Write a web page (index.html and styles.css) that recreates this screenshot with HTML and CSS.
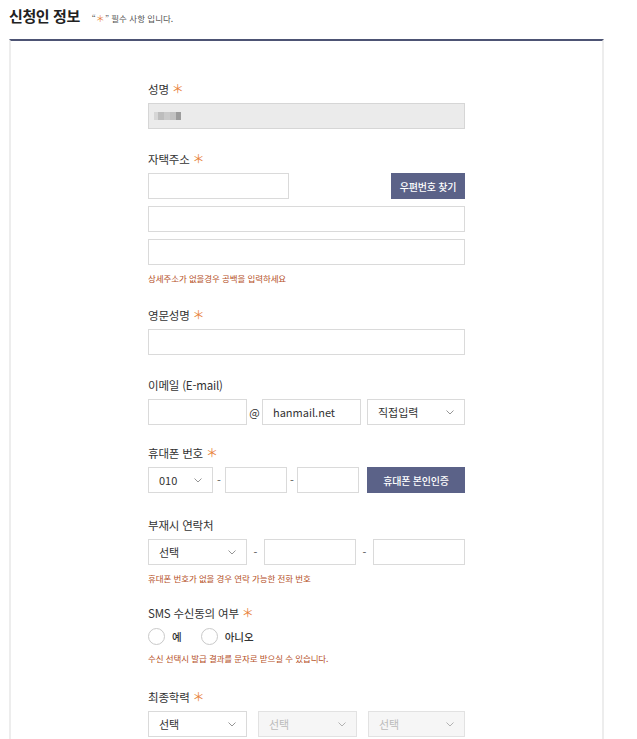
FILE: index.html
```html
<!DOCTYPE html>
<html lang="ko">
<head>
<meta charset="utf-8">
<title>신청인 정보</title>
<link rel="stylesheet" href="styles.css">
</head>
<body>
<div class="page">
  <div class="head">
    <h2 class="title">신청인 정보</h2>
    <span class="note">“<span class="star">＊</span>” 필수 사항 입니다.</span>
  </div>
  <div class="card">
    <div class="form">
      <div class="field">
        <div class="label">성명 <span class="star">＊</span></div>
        <div class="input disabled w-full">
          <span class="blur"><i class="b1"></i><i class="b2"></i><i class="b3"></i><i class="b4"></i><i class="b5"></i></span>
        </div>
      </div>

      <div class="field">
        <div class="label">자택주소 <span class="star">＊</span></div>
        <div class="row between">
          <div class="input w-zip"></div>
          <div class="btn w-zipbtn">우편번호 찾기</div>
        </div>
        <div class="input w-full mt7"></div>
        <div class="input w-full mt7"></div>
        <div class="hint">상세주소가 없을경우 공백을 입력하세요</div>
      </div>

      <div class="field">
        <div class="label">영문성명 <span class="star">＊</span></div>
        <div class="input w-full"></div>
      </div>

      <div class="field mb20">
        <div class="label">이메일 (E-mail)</div>
        <div class="row">
          <div class="input w99"></div>
          <span class="at">@</span>
          <div class="input w99 text">hanmail.net</div>
          <div class="select w98 ml6"><span>직접입력</span><svg class="chev" viewBox="0 0 8 5"><path d="M0.5 0.5 L4 4 L7.5 0.5"/></svg></div>
        </div>
      </div>

      <div class="field mb24">
        <div class="label">휴대폰 번호 <span class="star">＊</span></div>
        <div class="row">
          <div class="select w65"><span>010</span><svg class="chev" viewBox="0 0 8 5"><path d="M0.5 0.5 L4 4 L7.5 0.5"/></svg></div>
          <span class="dash d12">-</span>
          <div class="input w62"></div>
          <span class="dash d10">-</span>
          <div class="input w62"></div>
          <div class="btn w98 ml8">휴대폰 본인인증</div>
        </div>
      </div>

      <div class="field mb20">
        <div class="label">부재시 연락처</div>
        <div class="row">
          <div class="select w99"><span>선택</span><svg class="chev" viewBox="0 0 8 5"><path d="M0.5 0.5 L4 4 L7.5 0.5"/></svg></div>
          <span class="dash d17">-</span>
          <div class="input w92"></div>
          <span class="dash d17">-</span>
          <div class="input w92"></div>
        </div>
        <div class="hint">휴대폰 번호가 없을 경우 연락 가능한 전화 번호</div>
      </div>

      <div class="field mb24">
        <div class="label">SMS 수신동의 여부 <span class="star">＊</span></div>
        <div class="radios">
          <span class="radio"><i class="circle"></i>예</span>
          <span class="radio"><i class="circle"></i>아니오</span>
        </div>
        <div class="hint">수신 선택시 발급 결과를 문자로 받으실 수 있습니다.</div>
      </div>

      <div class="field">
        <div class="label">최종학력 <span class="star">＊</span></div>
        <div class="row">
          <div class="select w99"><span>선택</span><svg class="chev" viewBox="0 0 8 5"><path d="M0.5 0.5 L4 4 L7.5 0.5"/></svg></div>
          <div class="select off w99 ml11"><span>선택</span><svg class="chev" viewBox="0 0 8 5"><path d="M0.5 0.5 L4 4 L7.5 0.5"/></svg></div>
          <div class="select off w97 ml11"><span>선택</span><svg class="chev" viewBox="0 0 8 5"><path d="M0.5 0.5 L4 4 L7.5 0.5"/></svg></div>
        </div>
      </div>
    </div>
  </div>
</div>
</body>
</html>
```

FILE: styles.css
```css
* { box-sizing: border-box; }
html, body { margin: 0; padding: 0; background: #fff; }
body {
  font-family: "Noto Sans CJK KR", "Noto Sans", sans-serif;
  color: #333;
  overflow: hidden;
}
.page { width: 637px; height: 739px; padding-left: 9px; overflow: hidden; }
.head {
  height: 39px;
  display: flex;
  align-items: flex-start;
  padding-top: 5px;
}
.title {
  margin: 0;
  font-size: 15px;
  font-weight: 700;
  line-height: 22px;
  color: #222;
  letter-spacing: -0.4px;
}
.note {
  margin-left: 12px;
  margin-top: 6px;
  font-size: 8.5px;
  line-height: 14px;
  color: #555;
}
.note .star { font-size: 9px; }
.star { color: #e8823a; }
.card {
  width: 595px;
  height: 700px;
  border-top: 2px solid #4d5474;
  border-left: 2px solid #ededed;
  border-right: 2px solid #ededed;
  padding-top: 40px;
  padding-left: 137px;
}
.form { width: 317px; }
.field { margin-bottom: 22px; }
.mb20 { margin-bottom: 20px; }
.mb24 { margin-bottom: 24px; }
.label {
  font-size: 11.5px;
  line-height: 16px;
  color: #333;
  margin-bottom: 6px;
  letter-spacing: -0.2px;
}
.label .star { font-size: 12px; }
.row { display: flex; align-items: center; }
.between { justify-content: space-between; }
.input, .select {
  height: 26px;
  border: 1px solid #dadada;
  background: #fff;
  font-size: 11px;
  color: #333;
  display: flex;
  align-items: center;
  padding-left: 10px;
}
.input.disabled { background: #ebebeb; border-color: #d6d6d6; padding-left: 5px; }
.select { justify-content: space-between; padding-right: 10px; }
.select.off { background: #f6f6f6; border-color: #e2e2e2; color: #bbb; }
.chev { width: 8px; height: 5px; }
.chev path { fill: none; stroke: #8a8a8a; stroke-width: 0.9; }
.select.off .chev path { stroke: #aaa; }
.w-full { width: 317px; }
.w-zip { width: 141px; }
.w-zipbtn { width: 74px; }
.w99 { width: 99px; }
.w98 { width: 98px; }
.w97 { width: 97px; }
.w92 { width: 92px; }
.w65 { width: 65px; }
.w62 { width: 62px; }
.ml6 { margin-left: 6px; }
.ml8 { margin-left: 8px; }
.ml11 { margin-left: 11px; }
.mt7 { margin-top: 7px; }
.btn {
  height: 26px;
  background: #5b6288;
  color: #fff;
  font-size: 10px;
  font-weight: 500;
  display: flex;
  align-items: center;
  justify-content: center;
  letter-spacing: -0.2px;
}
.at {
  width: 15px;
  text-align: center;
  font-size: 11px;
  color: #333;
}
.dash {
  text-align: center;
  font-size: 11px;
  color: #555;
}
.d12 { width: 12px; }
.d10 { width: 10px; }
.d17 { width: 17px; }
.hint {
  margin-top: 6px;
  font-size: 8.5px;
  line-height: 14px;
  color: #b5501f;
  letter-spacing: -0.1px;
}
.radios { display: flex; align-items: center; height: 18px; margin-top: 4px; }
.radio {
  display: flex;
  align-items: center;
  font-size: 10.5px;
  font-weight: 500;
  color: #333;
  margin-right: 19px;
}
.circle {
  width: 17px;
  height: 17px;
  border: 1.5px solid #c9c9c9;
  border-radius: 50%;
  margin-right: 7px;
  background: #fff;
}
.blur { display: flex; align-items: center; height: 8px; }
.blur i { display: block; height: 8px; }
.b1 { width: 4px; background: #d6d6d6; }
.b2 { width: 6px; background: #bdbdbd; }
.b3 { width: 6px; background: #cacaca; }
.b4 { width: 6px; background: #c2c2c2; }
.b5 { width: 5px; background: #9c9c9c; }
```
